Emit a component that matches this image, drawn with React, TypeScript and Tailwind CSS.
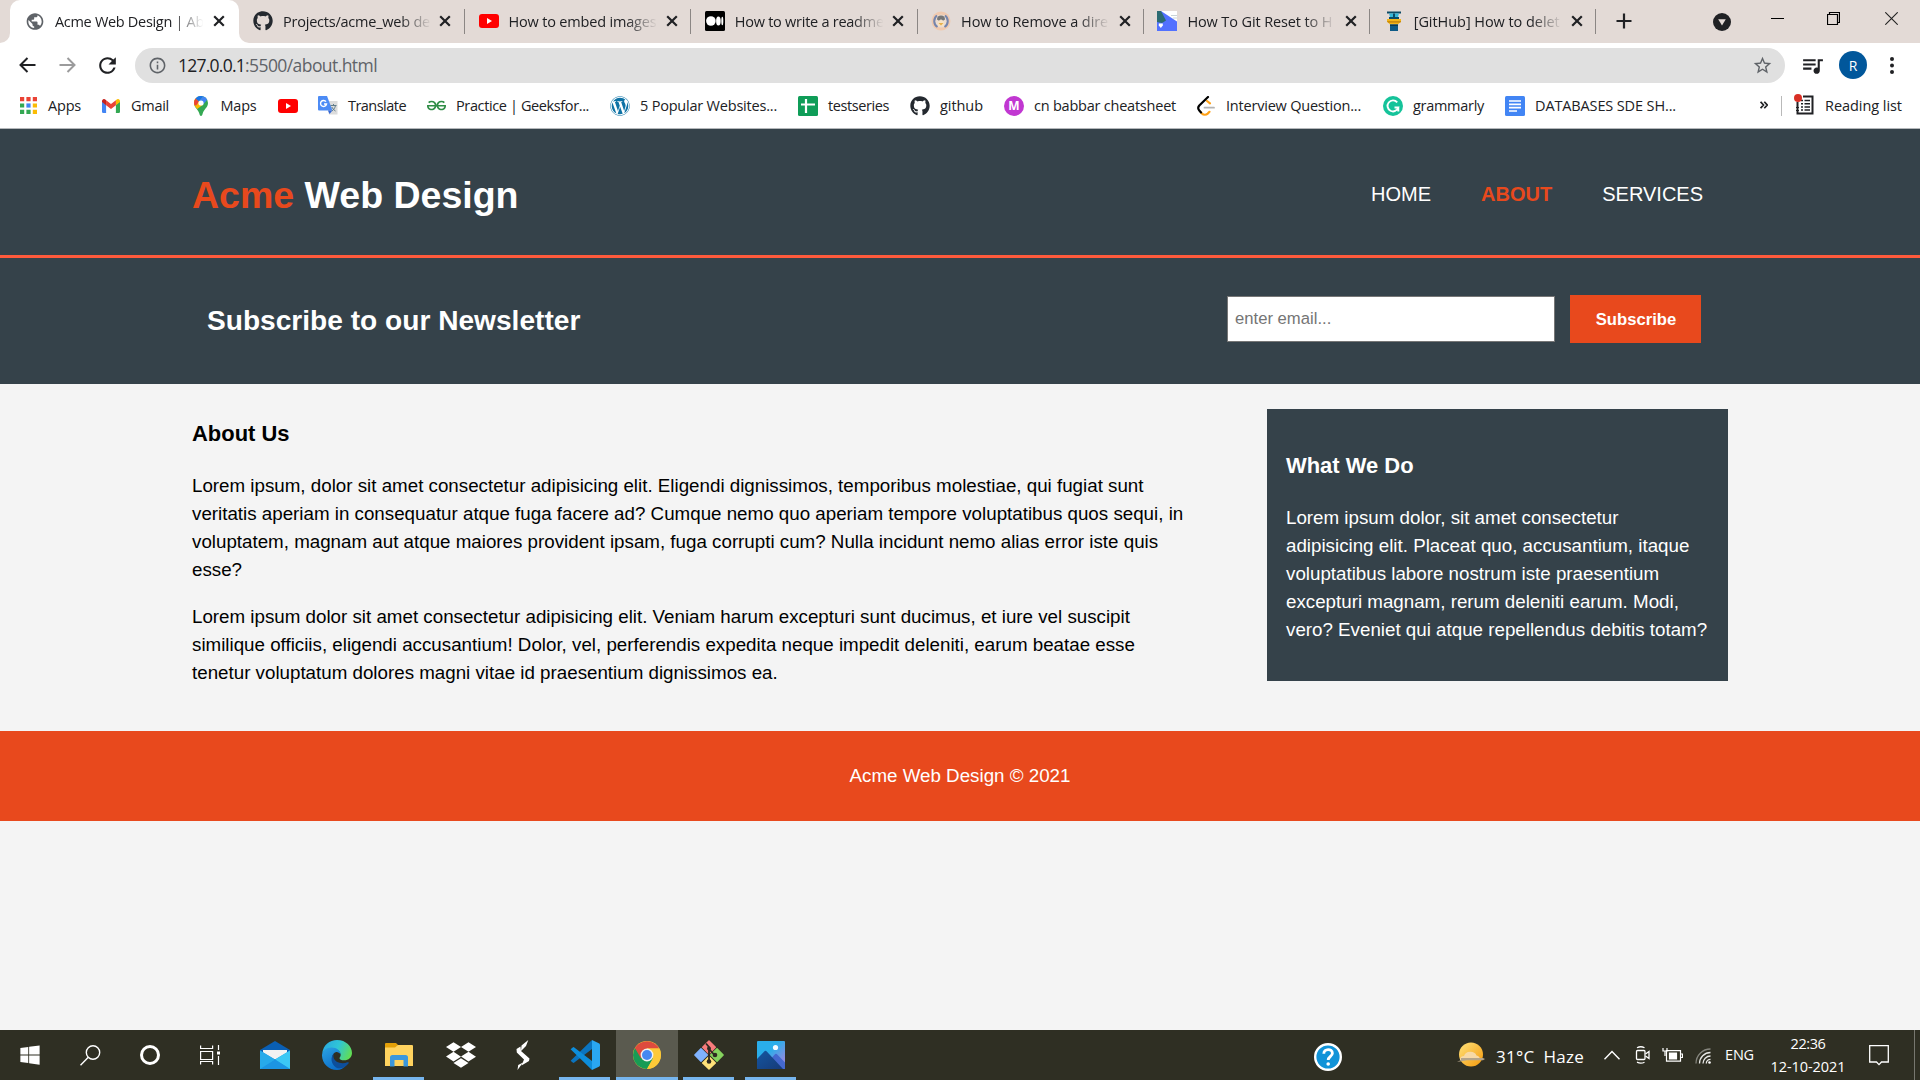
import React, { useLayoutEffect, useRef } from "react";
import { FaGithub, FaWordpress, FaDropbox, FaWindows } from "react-icons/fa";
import { MdPublic, MdInfoOutline, MdStarBorder, MdQueueMusic, MdRefresh } from "react-icons/md";
import { SiGeeksforgeeks } from "react-icons/si";

/* Text run whose tracking is adjusted so that it spans w pixels. */
function Label({ w, className = "", children }: { w: number; className?: string; children: string }) {
  const ref = useRef<HTMLSpanElement>(null);
  useLayoutEffect(() => {
    const el = ref.current;
    if (!el) return;
    el.style.letterSpacing = "0px";
    const natural = el.getBoundingClientRect().width;
    el.style.letterSpacing = `${(w - natural) / children.length}px`;
  }, [w, children]);
  return (
    <span ref={ref} className={`inline-block whitespace-pre ${className}`}>
      {children}
    </span>
  );
}

const YouTube = () => (
  <svg width="20" height="14" viewBox="0 0 20 14">
    <rect width="20" height="14" rx="3" fill="#f00" />
    <path d="M8 4v6l5-3z" fill="#fff" />
  </svg>
);

const Medium = () => (
  <svg width="20" height="20" viewBox="0 0 20 20">
    <rect width="20" height="20" rx="1.5" fill="#000" />
    <circle cx="5.9" cy="10" r="4.8" fill="#fff" />
    <ellipse cx="13.4" cy="10" rx="2.3" ry="4.6" fill="#fff" />
    <ellipse cx="17.3" cy="10" rx="1" ry="4.2" fill="#fff" />
  </svg>
);

const Penguin = () => (
  <svg width="20" height="20" viewBox="0 0 20 20">
    <circle cx="10" cy="10" r="9.5" fill="#f0c9ae" />
    <circle cx="10" cy="10" r="6.6" fill="#ecdccf" />
    <path d="M6.5 16A7 7 0 0 1 6 4.500M14 4.500A7 7 0 0 1 13.500 16" fill="none" stroke="#7585ad" strokeWidth="2" />
    <path d="M6 8.500a4 4 0 0 1 8 0l-2 1.200-2-1.400-2 1.400z" fill="#777" />
    <path d="M7 11.500c0-3 6-3 6 0v3.500H7z" fill="#f6e2c4" />
    <path d="M7.500 12h5L10 14.500z" fill="#e8b04a" />
  </svg>
);

const BlueHill = () => (
  <svg width="20" height="20" viewBox="0 0 20 20">
    <rect width="20" height="20" fill="#fff" />
    <path d="M0 0h4l16 10.500V20H0z" fill="#5271ff" />
    <path d="M0 0h4l5 9.500-4 2.500-5-1z" fill="#2c6b72" />
    <path d="M1.800 12.500h4v2l-2 2.500-2-2.500z" fill="#fff" />
    <path d="M14 4.500h6M16 7h4" stroke="#c9d4d8" />
  </svg>
);

const Tower = () => (
  <svg width="20" height="20" viewBox="0 0 20 20">
    <path d="M3 .5h14v2H3z" fill="#0c4a66" />
    <path d="M5 2.500h10l-1 3.500H6z" fill="#35b6d8" />
    <path d="M9 2.500h2v3.500H9z" fill="#0c4a66" />
    <path d="M5 6h10v2H5z" fill="#0c4a66" />
    <path d="M3 8h14v2.500l-3 3H6l-3-3z" fill="#f5b518" />
    <path d="M3 10h14v1l-1 .8H4z" fill="#c98d10" />
    <path d="M6 13.500h8V20H6z" fill="#0e5a86" />
    <path d="M6 13.500h8v1.500H6z" fill="#0a3a55" />
  </svg>
);

const CloseX = () => (
  <svg width="12" height="12" viewBox="0 0 12 12">
    <path d="M1.2 1.2l9.6 9.6M10.8 1.2l-9.6 9.6" stroke="#202124" strokeWidth="2.2" />
  </svg>
);

const tabs = [
  { icon: <MdPublic size={21} color="#5f6368" />, title: "Acme Web Design | Ab", w: 149 },
  { icon: <FaGithub size={20} color="#24292f" />, title: "Projects/acme_web de", w: 147 },
  { icon: <YouTube />, title: "How to embed images", w: 148 },
  { icon: <Medium />, title: "How to write a readme", w: 149 },
  { icon: <Penguin />, title: "How to Remove a dire", w: 147 },
  { icon: <BlueHill />, title: "How To Git Reset to H", w: 145 },
  { icon: <Tower />, title: "[GitHub] How to delet", w: 146 },
];

function TabStrip() {
  return (
    <div className="flex h-[43px] bg-[#e3dad6]">
      <div className="flex h-full w-[10px] items-end bg-white">
        <div className="h-full w-full rounded-br-[10px] bg-[#e3dad6]" />
      </div>
      <div className="flex">
        {tabs.map((t, i) => (
          <div
            key={t.title}
            className={
              i === 0
                ? "flex h-[43px] w-[229px] items-center bg-[#e3dad6]"
                : i === 1
                  ? "flex h-[43px] w-[226px] items-center bg-white"
                  : "flex h-[43px] w-[226.3px] items-center bg-[#e3dad6]"
            }
          >
            <div
              className={
                i === 0
                  ? "flex h-full w-full items-center rounded-t-[10px] bg-white pb-[1px] pl-[15px]"
                  : i === 1
                    ? "flex h-full w-full items-center rounded-bl-[10px] bg-[#e3dad6] pb-[1px] pl-[14px]"
                    : "flex h-full w-full items-center pb-[1px] pl-[13.500px]"
              }
            >
              <span className="flex w-5 shrink-0 justify-center">{t.icon}</span>
              <div className="ml-[10px] w-[150px] overflow-hidden [mask-image:linear-gradient(to_right,#000_78%,transparent_99%)]">
                <Label w={t.w} className="-mt-px text-[14.5px] leading-[22px] text-[#202124]">
                  {t.title}
                </Label>
              </div>
              <span className={i === 1 ? "ml-[6px] flex" : "ml-[7.500px] flex"}>
                <CloseX />
              </span>
              {i > 0 && <div className="ml-auto h-[25px] w-px bg-[#8b8684]" />}
            </div>
          </div>
        ))}
      </div>
      <svg className="ml-[20px] mt-[13px]" width="16" height="16" viewBox="0 0 16 16">
        <path d="M8 .5v15M.5 8h15" stroke="#202124" strokeWidth="2.2" />
      </svg>
      <div className="ml-auto flex pr-[22px]">
        <svg className="mt-[13px]" width="18" height="18" viewBox="0 0 18 18">
          <circle cx="9" cy="9" r="9" fill="#202124" />
          <path d="M5.2 6.2h7.6L9 12.6z" fill="#e3dad6" />
        </svg>
        <svg className="ml-[40px] mt-[12px]" width="13" height="13" viewBox="0 0 13 13">
          <path d="M0 6.5h13" stroke="#000" />
        </svg>
        <svg className="ml-[43px] mt-[12px]" width="13" height="13" viewBox="0 0 13 13">
          <path d="M.5 2.5h10v10H.5zM2.5 2.5v-2h10v10h-2" stroke="#000" fill="none" strokeWidth="1.2" />
        </svg>
        <svg className="ml-[45px] mt-[12px]" width="13" height="13" viewBox="0 0 13 13">
          <path d="M.3 .3l12.4 12.4M12.7 .3L.3 12.7" stroke="#222" strokeWidth="1.1" />
        </svg>
      </div>
    </div>
  );
}

function Toolbar() {
  return (
    <div className="flex h-[45px] items-center bg-white pl-[19px]">
      <svg className="-mt-px" width="17" height="16" viewBox="0 0 17 16" fill="none" stroke="#202124" strokeWidth="2">
        <path d="M16.500 8H2M8.500 1L1.500 8l7 7" />
      </svg>
      <svg className="-mt-px ml-[23px]" width="17" height="16" viewBox="0 0 17 16" fill="none" stroke="#9b9b9c" strokeWidth="2">
        <path d="M.5 8H15M8.500 1l7 7-7 7" />
      </svg>
      <span className="-mt-px ml-[19px] flex">
        <MdRefresh size={25} color="#202124" />
      </span>
      <div className="ml-[15px] flex h-[35px] w-[1650px] items-center rounded-full bg-[#e0e0e0] pl-[13px] pr-[12px]">
        <MdInfoOutline size={19} color="#5f6368" />
        <div className="ml-[11px] flex pb-[1px] text-[17.5px] leading-[24px]">
          <Label w={67} className="text-[#202124]">127.0.0.1</Label>
          <Label w={132} className="text-[#5f6368]">:5500/about.html</Label>
        </div>
        <span className="ml-auto flex">
          <MdStarBorder size={21} color="#5f6368" />
        </span>
      </div>
      <span className="-mt-px ml-[15px] flex">
        <MdQueueMusic size={25} color="#202124" />
      </span>
      <div className="-mt-px ml-[14px] flex size-7 items-center justify-center rounded-full bg-[#01579b] text-[14px] text-white">R</div>
      <svg className="-mt-px ml-[23px]" width="4" height="17" viewBox="0 0 4 17" fill="#202124">
        <circle cx="2" cy="2" r="2" />
        <circle cx="2" cy="8.500" r="2" />
        <circle cx="2" cy="15" r="2" />
      </svg>
    </div>
  );
}

const AppsGrid = () => (
  <svg width="17" height="17" viewBox="0 0 17 17">
    <path d="M0 0h4.200v4.200H0zM6.400 0h4.200v4.200H6.400zM12.800 0H17v4.200h-4.200z" fill="#ea4335" />
    <path d="M0 6.400h4.200v4.200H0zM0 12.800h4.200V17H0zM6.400 12.800h4.200V17H6.400z" fill="#34a853" />
    <path d="M6.400 6.400h4.200v4.200H6.400z" fill="#4285f4" />
    <path d="M12.800 6.400H17v4.200h-4.200zM12.800 12.800H17V17h-4.200z" fill="#fbbc04" />
  </svg>
);

const Gmail = () => (
  <svg width="18" height="14" viewBox="0 0 18 14">
    <path d="M0 2.500l4.100 3.100V14H1.200A1.200 1.200 0 0 1 0 12.800z" fill="#4285f4" />
    <path d="M18 2.500l-4.100 3.100V14h2.900a1.200 1.200 0 0 0 1.200-1.200z" fill="#34a853" />
    <path d="M13.900 1.300v4.900L18 3.100V2a2 2 0 0 0-3.300-1.500z" fill="#fbbc04" />
    <path d="M4.100 6.200V1.200L9 4.900l4.900-3.700v5L9 9.900z" fill="#ea4335" />
    <path d="M0 2v1.100l4.100 3.100V1.300L3.300.5A2 2 0 0 0 0 2z" fill="#c5221f" />
  </svg>
);

const Maps = () => (
  <svg width="14" height="20" viewBox="0 0 14 20">
    <path d="M7 0a7 7 0 0 1 7 7c0 4.500-4.200 6.300-5.300 10.500C8.300 19 8 20 7 20s-1.300-1-1.700-2.500C4.200 13.300 0 11.500 0 7a7 7 0 0 1 7-7z" fill="#34a853" />
    <path d="M1.600 2.500L4.700 5 9.300 8.500 3.200 13C1.400 11 0 9.500 0 7c0-1.700.6-3.300 1.600-4.500z" fill="#fbbc04" />
    <path d="M1.600 2.500L5 5.500 2 9.800.3 8.700C-.3 6 .3 4 1.600 2.500z" fill="#ea4335" />
    <path d="M1.600 2.500A7 7 0 0 1 9 .3L4.700 5.300z" fill="#1a73e8" />
    <path d="M9 .3a7 7 0 0 1 4.200 3.500L9.200 8.500 5 5z" fill="#4285f4" />
    <circle cx="7" cy="7" r="2.600" fill="#fff" />
  </svg>
);

const Translate = () => (
  <svg width="20" height="19" viewBox="0 0 20 19">
    <path d="M8 5h11.500v13.500H11z" fill="#dcdcdc" />
    <path d="M1 0h8l5.500 14.500H1a1 1 0 0 1-1-1V1a1 1 0 0 1 1-1z" fill="#4c8bf5" />
    <path d="M10 14.500h4.500L11.500 18z" fill="#3367d6" />
    <path d="M8 5.700A3 3 0 1 0 8.500 8H6" fill="none" stroke="#fff" strokeWidth="1.400" />
    <path d="M12.500 9.500h6M15.500 8v1.500M17.500 9.500c-.5 2.500-2 4.500-3.500 5.500M13.800 11c.8 1.800 2 3 3.700 4" fill="none" stroke="#607d8b" />
  </svg>
);

const Sheet = () => (
  <svg width="20" height="20" viewBox="0 0 20 20">
    <rect width="20" height="20" rx="1.500" fill="#0f9d58" />
    <path d="M8 3v14M3 8.500h14" stroke="#fff" strokeWidth="2.200" />
  </svg>
);

const LeetCode = () => (
  <svg width="18" height="20" viewBox="0 0 18 20" fill="none" strokeLinecap="round" strokeWidth="2.200">
    <path d="M13 7.300L10 5" stroke="#ffa116" />
    <path d="M4 16.400l.9 1c1.600 1.700 4.200 1.700 5.800.2L12.500 15.800" stroke="#ffa116" />
    <path d="M11 1L2.300 9.500c-1.300 1.500-1.300 3.500 0 5L4 16.400" stroke="#000" />
    <path d="M7.500 11.700h9.500" stroke="#b3b3b3" strokeWidth="1.800" />
  </svg>
);

const Grammarly = () => (
  <svg width="20" height="20" viewBox="0 0 20 20">
    <circle cx="10" cy="10" r="10" fill="#15c39a" />
    <path d="M14.200 6.300A5.500 5.500 0 1 0 15.300 11.500H11.500M15.300 11v4.500" fill="none" stroke="#fff" strokeWidth="1.900" />
  </svg>
);

const Docs = () => (
  <svg width="20" height="20" viewBox="0 0 20 20">
    <rect width="20" height="20" rx="1.500" fill="#4285f4" />
    <path d="M4 5h12M4 8.300h12M4 11.700h12M4 15h8" stroke="#fff" strokeWidth="1.700" />
  </svg>
);

const MBadge = () => (
  <span className="flex size-5 items-center justify-center rounded-full bg-[#c137d1] text-[12px] font-bold text-white">M</span>
);

const bookmarks = [
  { slot: "w-[83px]", icon: <AppsGrid />, text: "Apps", w: 33 },
  { slot: "w-[89.5px]", icon: <Gmail />, text: "Gmail", w: 38 },
  { slot: "w-[87.5px]", icon: <Maps />, text: "Maps", w: 36 },
  { slot: "w-[40px]", icon: <YouTube />, text: "", w: 0 },
  { slot: "w-[108px]", icon: <Translate />, text: "Translate", w: 58 },
  { slot: "w-[184px]", icon: <SiGeeksforgeeks size={19} color="#2f8d46" />, text: "Practice | Geeksfor...", w: 133 },
  { slot: "w-[188px]", icon: <FaWordpress size={20} color="#0d72a5" />, text: "5 Popular Websites...", w: 137 },
  { slot: "w-[112px]", icon: <Sheet />, text: "testseries", w: 61 },
  { slot: "w-[94px]", icon: <FaGithub size={20} color="#24292f" />, text: "github", w: 43 },
  { slot: "w-[192px]", icon: <MBadge />, text: "cn babbar cheatsheet", w: 142 },
  { slot: "w-[187px]", icon: <LeetCode />, text: "Interview Question...", w: 135 },
  { slot: "w-[122px]", icon: <Grammarly />, text: "grammarly", w: 71 },
  { slot: "w-[190px]", icon: <Docs />, text: "DATABASES SDE SH...", w: 141 },
];

function BookmarksBar() {
  return (
    <div className="flex h-[41px] items-center border-b border-[#b4b7ba] bg-white pl-[18px] pb-[5px] text-[14.5px] leading-[20px] text-[#202124]">
      {bookmarks.map((b, i) => (
        <div key={i} className={`flex shrink-0 items-center ${b.slot}`}>
          <span className="mr-[10px] flex w-5 shrink-0 justify-center">{b.icon}</span>
          {b.text && <Label w={b.w}>{b.text}</Label>}
        </div>
      ))}
      <svg className="-mt-px ml-[65px]" width="8" height="9" viewBox="0 0 8 9" fill="none" stroke="#202124" strokeWidth="1.700">
        <path d="M.6 .8L3.500 4 .6 7.200M4.300 .8L7.200 4 4.300 7.200" />
      </svg>
      <div className="ml-[13px] h-5 w-px bg-[#b9b9b9]" />
      <svg className="-mt-[2px] ml-[12px]" width="20" height="21" viewBox="0 0 20 21">
        <path d="M3.500 8v11.500h15v-17H9" fill="none" stroke="#202124" strokeWidth="2" />
        <path d="M2 13.500h3M2 16.500h3" stroke="#202124" />
        <path d="M7 6.500h2M10.500 6.500h5.500M7 9.700h2M10.500 9.700h5.500M7 12.900h2M10.500 12.900h5.500M7 16h2M10.500 16h5.500" stroke="#202124" strokeWidth="1.500" />
        <circle cx="4" cy="4" r="4" fill="#d93025" />
      </svg>
      <Label w={77} className="ml-[11px]">Reading list</Label>
    </div>
  );
}

function Site() {
  return (
    <div className="h-[901px] bg-[#f4f4f4] font-['Liberation_Sans',Arial,sans-serif] text-[18.75px] leading-[28px] text-black">
      <header className="h-[129px] border-b-[3px] border-[#ff5a3c] bg-[#35424a] text-white">
        <div className="mx-auto flex w-[1536px] justify-between">
          <h1 className="mt-[38px] text-[37.5px] leading-[56px] font-bold">
            <span className="text-[#e8491d]">Acme</span> Web Design
          </h1>
          <nav className="mt-[50px] flex gap-[50px] pr-[25px] text-[20px] leading-[30px]">
            <span>HOME</span>
            <span className="font-bold text-[#e8491d]">ABOUT</span>
            <span>SERVICES</span>
          </nav>
        </div>
      </header>
      <section className="h-[126px] bg-[#35424a] text-white">
        <div className="mx-auto flex w-[1536px] pl-[15px]">
          <h2 className="mt-[42px] text-[28.125px] leading-[42px] font-bold">Subscribe to our Newsletter</h2>
          <input
            type="email"
            placeholder="enter email..."
            className="mt-[38px] ml-auto h-[46px] w-[328px] border border-[#767676] bg-white pl-[7px] text-[16.67px] placeholder:text-[#757575]"
          />
          <button className="mt-[37px] mr-[27px] ml-[15px] h-[48px] w-[131px] bg-[#e8491d] pt-[1px] pl-[1px] text-[16.67px] font-bold">
            Subscribe
          </button>
        </div>
      </section>
      <section className="mx-auto flex h-[347px] w-[1536px] items-start justify-between">
        <article className="w-[1000px] whitespace-nowrap">
          <h3 className="mt-[33px] text-[21.94px] leading-[33px] font-bold">About Us</h3>
          <p className="mt-[22px]">
            Lorem ipsum, dolor sit amet consectetur adipisicing elit. Eligendi dignissimos, temporibus molestiae, qui fugiat sunt<br />
            veritatis aperiam in consequatur atque fuga facere ad? Cumque nemo quo aperiam tempore voluptatibus quos sequi, in<br />
            voluptatem, magnam aut atque maiores provident ipsam, fuga corrupti cum? Nulla incidunt nemo alias error iste quis<br />
            esse?
          </p>
          <p className="mt-[19px]">
            Lorem ipsum dolor sit amet consectetur adipisicing elit. Veniam harum excepturi sunt ducimus, et iure vel suscipit<br />
            similique officiis, eligendi accusantium! Dolor, vel, perferendis expedita neque impedit deleniti, earum beatae esse<br />
            tenetur voluptatum dolores magni vitae id praesentium dignissimos ea.
          </p>
        </article>
        <aside className="mt-[25px] h-[272px] w-[461px] bg-[#35424a] pl-[19px] whitespace-nowrap text-white">
          <h3 className="mt-[40px] text-[21.94px] leading-[33px] font-bold">What We Do</h3>
          <p className="mt-[22px]">
            Lorem ipsum dolor, sit amet consectetur<br />
            adipisicing elit. Placeat quo, accusantium, itaque<br />
            voluptatibus labore nostrum iste praesentium<br />
            excepturi magnam, rerum deleniti earum. Modi,<br />
            vero? Eveniet qui atque repellendus debitis totam?
          </p>
        </aside>
      </section>
      <footer className="flex h-[90px] items-center justify-center bg-[#e8491d] text-white">Acme Web Design © 2021</footer>
    </div>
  );
}

const Mail = () => (
  <svg width="30" height="28" viewBox="0 0 30 28">
    <path d="M0 9L15 0l15 9v4H0z" fill="#0a5fb4" />
    <path d="M3 9h24v9H3z" fill="#f2f2f2" />
    <path d="M0 9.500l15 9 15-9V28H0z" fill="#1f9fe6" />
    <path d="M30 9.500V28L15 18.500z" fill="#3cc8f4" />
    <path d="M0 28h30L15 18.500z" fill="#1c95e2" />
    <path d="M0 9.500V28l15-9.500z" fill="#27aaea" />
  </svg>
);

const Edge = () => (
  <svg width="30" height="30" viewBox="0 0 30 30">
    <defs>
      <linearGradient id="edgeTop" x1="0" y1="0.300" x2="1" y2="0.600">
        <stop offset="0" stopColor="#2aa9e0" />
        <stop offset=".5" stopColor="#2fc6d6" />
        <stop offset="1" stopColor="#62de52" />
      </linearGradient>
      <linearGradient id="edgeLow" x1="0" y1="0" x2=".6" y2="1">
        <stop offset="0" stopColor="#2ba3e3" />
        <stop offset="1" stopColor="#0b6cc9" />
      </linearGradient>
    </defs>
    <path d="M.2 13C1.500 5 7.500 0 15 0c9 0 15 6.500 15 13 0 4.500-3.500 7.300-7.700 7.300-3 0-4.800-1-4.800-2.100 0-.9 1.200-1.200 1.200-3.400 0-3-3-5.800-7.500-5.800C6 9 2 11 .2 13z" fill="url(#edgeTop)" />
    <path d="M0 15c.2-4.500 4.500-7.500 9.500-7.500 5.500 0 9.200 3.500 9.200 7-1-1.800-3-2.700-4.500-2.500-4 1-5 6-2.500 9.500 2.500 3.600 7.500 5 12.500 3.500C22 28 18.500 30 15 30 6.500 30-.2 23 0 15z" fill="url(#edgeLow)" />
    <path d="M12 13.500C8 17 9 24 14 27.500c4 2 9 .5 12.500-4 .8-1-.1-1.700-1.100-1.200-5.400 2.400-12.900.2-13.900-5-.2-1.400 0-2.800.5-3.800z" fill="#0d4f9c" />
  </svg>
);

const Explorer = () => (
  <svg width="28" height="24" viewBox="0 0 28 24">
    <path d="M0 1a1 1 0 0 1 1-1h10l3 3v6H0z" fill="#e3a008" />
    <path d="M0 4.500h10L13 2h14a1 1 0 0 1 1 1v20H0z" fill="#ffd35f" />
    <path d="M5 23.500V14.500a2.500 2.500 0 0 1 2.500-2.500h13a2.500 2.500 0 0 1 2.500 2.500v9h-4.500V17h-9v6.500z" fill="#3b97dd" />
  </svg>
);

const Bolt = () => (
  <svg width="14" height="30" viewBox="0 0 14 30" fill="#fff">
    <path d="M12.300 0L5.500 5.500 5 11l5-5zM.5 9l4-2.500L5 11l8.500 7.500-.5 2.500-7.500 4.500L8 19.500.8 12.500zM1.500 30l.7-5L7 22.500z" />
  </svg>
);

const VsCode = () => (
  <svg width="30" height="30" viewBox="0 0 30 30">
    <path d="M.6 20.700l2.100 1.900a1.300 1.300 0 0 0 1.600 0L22 9V.1z" fill="#0b74bf" />
    <path d="M.6 9.300L2.700 7.400a1.300 1.300 0 0 1 1.600 0L22 21v8.900z" fill="#0d8ddb" />
    <path d="M22 .1l6.800 3.200c.7.400 1.200 1 1.200 1.800v19.800c0 .8-.5 1.400-1.200 1.800L22 29.900z" fill="#2aa7f2" />
  </svg>
);

const Chrome = () => (
  <svg width="28" height="28" viewBox="0 0 28 28">
    <circle cx="14" cy="14" r="14" fill="#fcc934" />
    <path d="M14 14L1.900 7A14 14 0 0 0 14 28l6-10.500z" fill="#189b55" />
    <path d="M1.900 7A14 14 0 0 1 26.100 7.500H14V14l-6 3.500z" fill="#dd4b3e" />
    <path d="M26.300 7.500H14v6.500l6 3.500L14 28A14 14 0 0 0 26.300 7.500z" fill="#fdc938" />
    <circle cx="14" cy="14" r="6.400" fill="#f1f1f1" />
    <circle cx="14" cy="14" r="5" fill="#4688f1" />
  </svg>
);

const GitBash = () => (
  <svg width="30" height="30" viewBox="0 0 30 30" strokeLinejoin="round" strokeWidth="1.500">
    <path d="M15 1l6.300 6.300L15 13.600 8.700 7.300z" fill="#f87c7c" stroke="#f87c7c" />
    <path d="M7 8.700l6.300 6.300L7 21.300.9 15z" fill="#80b3ff" stroke="#80b3ff" />
    <path d="M23 8.700l6.100 6.300-6.100 6.300-6.300-6.300z" fill="#86d35e" stroke="#86d35e" />
    <path d="M15 16.700l6.300 6.300L15 29l-6.300-6z" fill="#ffe27a" stroke="#ffe27a" />
    <path d="M12 3.500l3 3.500v14M15 9l5.500 6" stroke="#2e2a22" strokeWidth="1.800" fill="none" />
    <circle cx="15" cy="21.500" r="2.300" fill="#2e2a22" />
    <circle cx="21" cy="15" r="2.300" fill="#2e2a22" />
    <circle cx="15" cy="8.500" r="2" fill="#2e2a22" />
  </svg>
);

const Photos = () => (
  <svg width="28" height="28" viewBox="0 0 28 28">
    <defs>
      <linearGradient id="sky" x1="0" y1="0" x2="1" y2="1">
        <stop offset=".4" stopColor="#2aaeea" />
        <stop offset=".8" stopColor="#8a8ce0" />
      </linearGradient>
      <linearGradient id="hill" x1="0" y1="0" x2="1" y2="1">
        <stop offset="0" stopColor="#1456a0" />
        <stop offset="1" stopColor="#163a78" />
      </linearGradient>
    </defs>
    <rect width="28" height="28" rx="1" fill="url(#sky)" />
    <path d="M12 20l5.500-6.300a2 2 0 0 1 3 0L28 21.500V28H12z" fill="#4468cf" />
    <path d="M0 18l7-7.300a2 2 0 0 1 3 0L26 28H0z" fill="url(#hill)" />
    <circle cx="18.500" cy="6.500" r="2.600" fill="#f4fbff" />
  </svg>
);

const apps = [
  { icon: <Mail />, state: "idle" },
  { icon: <Edge />, state: "idle" },
  { icon: <Explorer />, state: "open" },
  { icon: <FaDropbox size={30} color="#fff" />, state: "idle" },
  { icon: <Bolt />, state: "idle" },
  { icon: <VsCode />, state: "open" },
  { icon: <Chrome />, state: "active" },
  { icon: <GitBash />, state: "open" },
  { icon: <Photos />, state: "open" },
];

function Taskbar() {
  return (
    <div className="flex h-[50px] bg-[#2f2f23] text-white">
      <div className="flex w-[60px] items-center justify-center">
        <FaWindows size={22} />
      </div>
      <div className="flex w-[60px] items-center justify-center">
        <svg width="21" height="21" viewBox="0 0 21 21" fill="none" stroke="#fff" strokeWidth="1.400">
          <circle cx="13" cy="7.500" r="6.700" />
          <path d="M8.300 12.300L.5 20.300" />
        </svg>
      </div>
      <div className="flex w-[60px] items-center justify-center">
        <div className="size-5 rounded-full border-[3px] border-white" />
      </div>
      <div className="flex w-[60px] items-center justify-center pb-[1px]">
        <svg width="20" height="20" viewBox="0 0 20 20" fill="none" stroke="#fff" strokeWidth="1.200">
          <path d="M.6 .500v3h12v-3M.6 6.500h12v8H.6zM.6 19.500v-3h12v3M18.500 0v5M18.500 11v9" />
          <path d="M17 6.500h3v3h-3z" fill="#fff" stroke="none" />
        </svg>
      </div>
      <div className="ml-[3.500px] flex">
        {apps.map((a, i) => (
          <div
            key={i}
            className={
              a.state === "active"
                ? "flex h-full w-[62px] flex-col items-center bg-[#5a5a4f]"
                : "flex h-full w-[62px] flex-col items-center"
            }
          >
            <div className="flex h-[47px] items-center pt-[3px]">{a.icon}</div>
            {a.state !== "idle" && (
              <div className={a.state === "active" ? "h-[3px] w-full bg-[#76b5ee]" : "h-[3px] w-[51px] bg-[#76b5ee]"} />
            )}
          </div>
        ))}
      </div>
      <div className="ml-auto flex items-center">
        <svg className="mt-[3px]" width="28" height="28" viewBox="0 0 28 28">
          <circle cx="14" cy="14" r="12.800" fill="#1193d8" stroke="#fff" strokeWidth="2.400" />
          <path d="M9.800 10.800c0-5.600 8.600-5.400 8.600-.6 0 3-4.200 3.300-4.200 6.800" fill="none" stroke="#fff" strokeWidth="2.800" />
          <circle cx="14.200" cy="21" r="1.800" fill="#fff" />
        </svg>
        <svg className="ml-[115px]" width="28" height="26" viewBox="0 0 28 26">
          <defs>
            <linearGradient id="sun" x1="0" y1="0" x2="1" y2="1">
              <stop offset="0" stopColor="#ffe27a" />
              <stop offset="1" stopColor="#f59a0c" />
            </linearGradient>
          </defs>
          <circle cx="14" cy="12.500" r="12" fill="url(#sun)" />
          <path d="M3 18a4 4 0 0 1 4-4 6.500 5.500 0 0 1 12.500-.5A4 4 0 0 1 23 18z" fill="#f7d9a6" />
          <path d="M4 16h22l2 1-2 1.300H10L0 20l4-2z" fill="#b5a58a" />
        </svg>
        <Label w={88} className="ml-[11px] mt-[3px] text-[17px]">31°C  Haze</Label>
        <svg className="ml-[20px]" width="16" height="10" viewBox="0 0 16 10" fill="none" stroke="#fff" strokeWidth="1.400">
          <path d="M.5 9.300L8 1.500l7.500 7.800" />
        </svg>
        <svg className="ml-[15px]" width="16" height="18" viewBox="0 0 16 18" fill="none" stroke="#fff" strokeWidth="1.300">
          <rect x="1.500" y="4.500" width="8.500" height="9" rx="1" />
          <path d="M10.500 8l3.500-2.500v7L10.500 10M2 1.800Q5.800 -.3 9.500 1.800M2 16.200q3.800 2 7.500 0" />
        </svg>
        <svg className="ml-[11px]" width="21" height="14" viewBox="0 0 21 14" fill="none" stroke="#fff" strokeWidth="1.200">
          <path d="M4.500 2.600h14v10.500H4.500zM19 6h1.500v3.500H19" />
          <path d="M7.500 5h7v6h-7z" fill="#fff" />
          <path d="M1 0v3h4V0M3 3v5" />
        </svg>
        <svg className="ml-[12px] mt-[2px]" width="16" height="16" viewBox="0 0 16 16" fill="none" strokeWidth="1.300">
          <path d="M1 15.500A14.500 14.500 0 0 1 15.500 1" stroke="#86867e" />
          <path d="M4.500 15.500a11 11 0 0 1 11-11M8 15.500A7.500 7.500 0 0 1 15.500 8M11.300 15.500a4.200 4.200 0 0 1 4.200-4.200" stroke="#e8e8e6" />
          <circle cx="14.500" cy="14.500" r="1.300" fill="#fff" />
        </svg>
        <Label w={29} className="ml-[14px] text-[14.5px]">ENG</Label>
        <div className="ml-[16px] flex w-[76px] flex-col items-center pb-[1px] text-[14.5px] leading-[23px]">
          <Label w={35}>22:36</Label>
          <Label w={75}>12-10-2021</Label>
        </div>
        <svg className="ml-[23px]" width="20" height="21" viewBox="0 0 20 21" fill="none" stroke="#fff" strokeWidth="1.300">
          <path d="M.7 .700h18.600v16.300H12.500L10 19.600 7.500 17H.7z" />
        </svg>
        <div className="mr-[5px] ml-[25px] h-[50px] w-px bg-[#77776f]" />
      </div>
    </div>
  );
}

export default function App() {
  return (
    <div className="flex h-[1080px] w-[1920px] flex-col overflow-hidden bg-white font-['Open_Sans','Noto_Sans',sans-serif]">
      <TabStrip />
      <Toolbar />
      <BookmarksBar />
      <Site />
      <Taskbar />
    </div>
  );
}
